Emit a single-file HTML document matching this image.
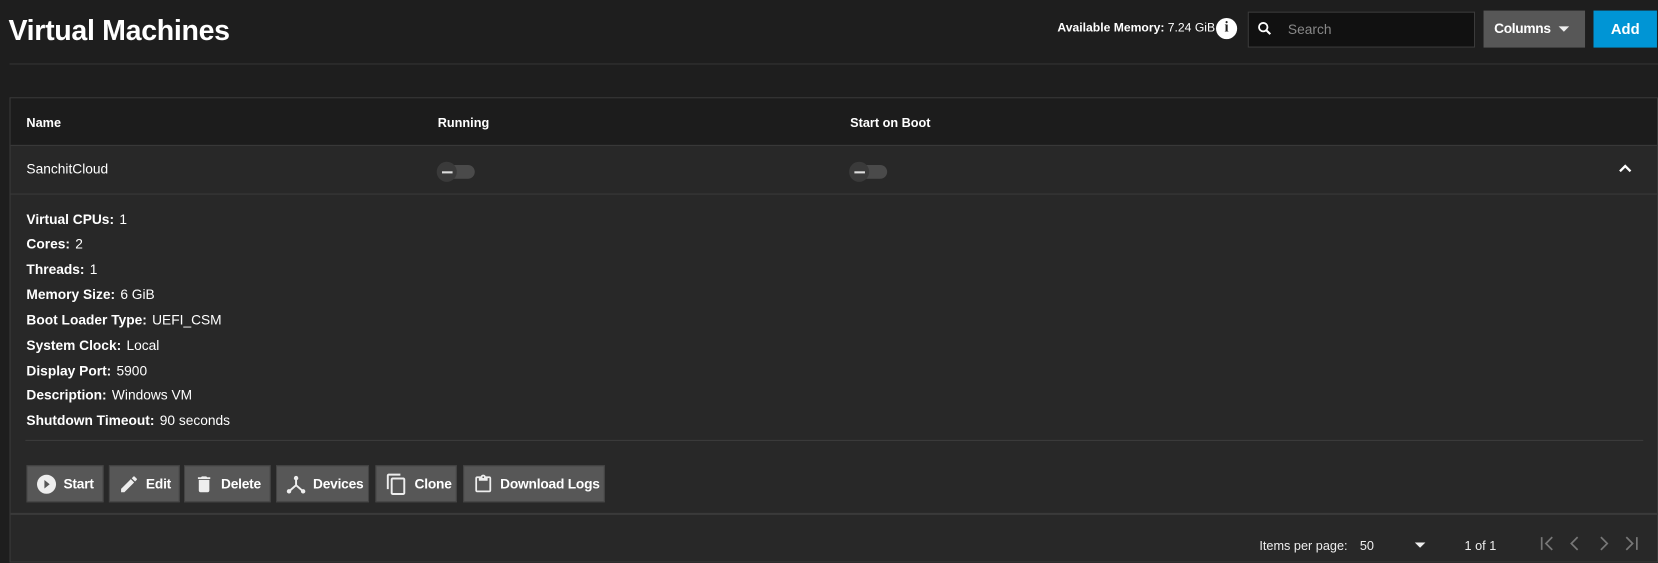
<!DOCTYPE html>
<html><head><style>
*{box-sizing:border-box;margin:0;padding:0}
body{width:1658px;height:552px;background:#1e1e1e;font-family:"Liberation Sans",sans-serif;color:#fff;position:relative;overflow:hidden}
#w{position:absolute;left:0;top:0;width:1568px;height:522px;transform:scale(1.05740);transform-origin:0 0}
.abs{position:absolute}
h1{position:absolute;left:8px;top:14px;font-size:27px;font-weight:bold;letter-spacing:-0.3px}
.panel{position:absolute;left:9px;top:92px;width:1559px;height:440px;background:#282828;border:1px solid #3a3a3a}
.hdr{position:absolute;left:0;top:0;width:100%;height:45px;background:#1c1c1c;border-bottom:1px solid #3a3a3a}
.th{position:absolute;top:16px;font-size:12px;font-weight:bold}
.row{position:absolute;left:0;top:45px;width:100%;height:46px;border-bottom:1px solid #3a3a3a}
.tog{position:absolute;width:34px;height:13px;border-radius:7px;background:#4a4a4a}
.tog::before{content:"";position:absolute;left:-2px;top:-3px;width:19px;height:19px;border-radius:50%;background:#3a3a3a}
.tog::after{content:"";position:absolute;left:3px;top:6px;width:10px;height:2px;background:#ddd}
.kv{position:absolute;left:15px;font-size:13px}
.kv b{font-weight:bold;margin-right:5px}
.btn{position:absolute;top:347px;height:35px;background:#575757;border:1px solid #444;font-size:13px;font-weight:bold;display:flex;align-items:center;gap:6px;padding-left:8px;white-space:nowrap;letter-spacing:-0.2px}
.btn svg{fill:#eee;flex:none}
.pg{position:absolute;top:416px;font-size:12px;color:#eee}
</style></head><body><div id="w">
<h1>Virtual Machines</h1>
<div class="abs" style="left:1000px;top:21px;font-size:11.5px;font-weight:bold;white-space:nowrap">Available Memory: <span style="font-weight:normal">7.24 GiB</span></div>
<div class="abs" style="left:1150px;top:17px;width:20px;height:20px;border-radius:50%;background:#fff;color:#1e1e1e;font-weight:bold;font-size:14px;text-align:center;line-height:20px;font-family:'Liberation Serif',serif">i</div>
<div class="abs" style="left:1180px;top:11px;width:215px;height:34px;background:#111;border:1px solid #3c3c3c"></div>
<svg class="abs" style="left:1188px;top:19px" width="16" height="16" viewBox="0 0 24 24"><circle cx="10" cy="10" r="6" stroke="#fff" stroke-width="2.6" fill="none"/><path d="M14 14l6 6" stroke="#fff" stroke-width="3"/></svg>
<div class="abs" style="left:1218px;top:20px;font-size:13px;color:#888">Search</div>
<div class="abs" style="left:1403px;top:10px;width:96px;height:35px;background:#575757"></div>
<div class="abs" style="left:1413px;top:19px;font-size:13px;font-weight:bold;letter-spacing:-0.3px">Columns</div>
<div class="abs" style="left:1474px;top:25px;border:5px solid transparent;border-top:5px solid #eee"></div>
<div class="abs" style="left:1507px;top:10px;width:60px;height:35px;background:#0095d5;font-size:14px;font-weight:bold;text-align:center;line-height:35px">Add</div>
<div class="abs" style="left:9px;top:60px;width:1559px;height:1px;background:#353535"></div>
<div class="panel">
<div class="hdr"><div class="th" style="left:15px">Name</div><div class="th" style="left:404px">Running</div><div class="th" style="left:794px">Start on Boot</div></div>
<div class="row">
<div class="abs" style="left:15px;top:14px;font-size:13px">SanchitCloud</div>
<div class="tog" style="left:405px;top:18px"></div>
<div class="tog" style="left:795px;top:18px"></div>
<svg class="abs" style="left:1520px;top:16px" width="14" height="10" viewBox="0 0 14 10"><path d="M2 8l5-5 5 5" stroke="#fff" stroke-width="2.2" fill="none"/></svg>
</div>
<div class="kv" style="top:107px"><b>Virtual CPUs:</b>1</div>
<div class="kv" style="top:130px"><b>Cores:</b>2</div>
<div class="kv" style="top:154px"><b>Threads:</b>1</div>
<div class="kv" style="top:178px"><b>Memory Size:</b>6 GiB</div>
<div class="kv" style="top:202px"><b>Boot Loader Type:</b>UEFI_CSM</div>
<div class="kv" style="top:226px"><b>System Clock:</b>Local</div>
<div class="kv" style="top:250px"><b>Display Port:</b>5900</div>
<div class="kv" style="top:273px"><b>Description:</b>Windows VM</div>
<div class="kv" style="top:297px"><b>Shutdown Timeout:</b>90 seconds</div>
<div class="abs" style="left:14px;top:323px;width:1530px;height:1px;background:#3c3c3c"></div>
<div class="btn" style="left:15px;width:73px"><svg width="20" height="20" viewBox="0 0 20 20"><circle cx="10" cy="10" r="9"/><path d="M8 6l5 4-5 4z" fill="#575757"/></svg>Start</div>
<div class="btn" style="left:93px;width:67px"><svg width="20" height="20" viewBox="0 0 24 24"><path d="M3 17.25V21h3.75L17.81 9.94l-3.75-3.75L3 17.25zM20.71 7.04a1 1 0 000-1.41l-2.34-2.34a1 1 0 00-1.41 0l-1.83 1.83 3.75 3.75 1.83-1.83z"/></svg>Edit</div>
<div class="btn" style="left:164px;width:82px"><svg width="20" height="20" viewBox="0 0 24 24"><path d="M6 19c0 1.1.9 2 2 2h8c1.1 0 2-.9 2-2V7H6v12zM19 4h-3.5l-1-1h-5l-1 1H5v2h14V4z"/></svg>Delete</div>
<div class="btn" style="left:251px;width:88px"><svg width="20" height="20" viewBox="0 0 24 24"><circle cx="12" cy="5" r="2.5"/><circle cx="4" cy="20" r="2.5"/><circle cx="20" cy="20" r="2.5"/><path d="M12 5v8L4 20M12 13l8 7" stroke="#eee" stroke-width="2.2" fill="none"/></svg>Devices</div>
<div class="btn" style="left:345px;width:77px"><svg width="22" height="22" viewBox="0 0 24 24"><path d="M16 1H4c-1.1 0-2 .9-2 2v14h2V3h12V1zm3 4H8c-1.1 0-2 .9-2 2v14c0 1.1.9 2 2 2h11c1.1 0 2-.9 2-2V7c0-1.1-.9-2-2-2zm0 16H8V7h11v14z"/></svg>Clone</div>
<div class="btn" style="left:428px;width:134px"><svg width="20" height="22" viewBox="0 0 24 24"><path d="M19 3h-4.18C14.4 1.840 13.3 1 12 1s-2.4.84-2.82 2H5c-1.1 0-2 .9-2 2v14c0 1.1.9 2 2 2h14c1.1 0 2-.9 2-2V5c0-1.1-.9-2-2-2zm-7 0c.55 0 1 .45 1 1s-.45 1-1 1-1-.45-1-1 .45-1 1-1zm7 16H5V5h2v3h10V5h2v14z"/></svg>Download Logs</div>
<div class="abs" style="left:0;top:392px;width:100%;height:2px;background:#3a3a3a"></div>
<div class="pg" style="left:1181px">Items per page:</div>
<div class="pg" style="left:1276px">50</div>
<div class="abs" style="left:1328px;top:420px;border:5px solid transparent;border-top:5px solid #eee"></div>
<div class="pg" style="left:1375px">1 of 1</div>
<svg class="abs" style="left:1444px;top:412px" width="110" height="18" viewBox="0 0 110 18"><g stroke="#777" stroke-width="1.6" fill="none"><path d="M4 3v12M14 3l-6 6 6 6"/><path d="M38 3l-6 6 6 6"/><path d="M60 3l6 6-6 6"/><path d="M84 3l6 6-6 6M94 3v12"/></g></svg>
</div>
</div></body></html>
